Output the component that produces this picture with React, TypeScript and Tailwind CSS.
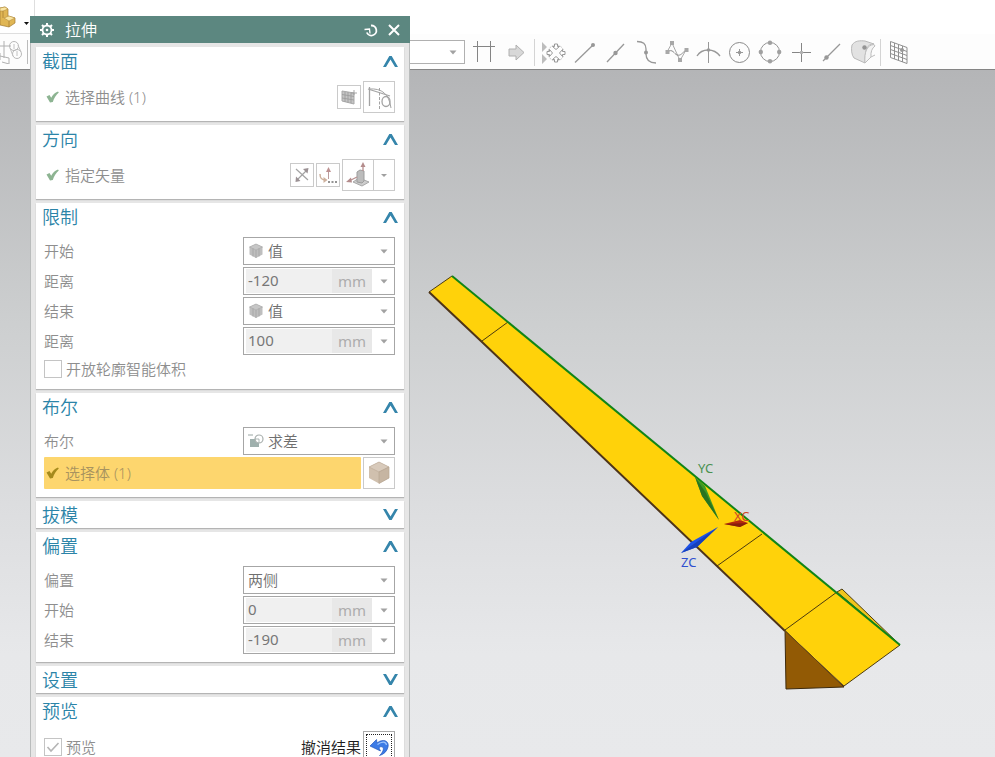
import type { ReactNode } from 'react';
import { useState } from 'react';

function Icon({ width = 24, height = 24, children }: { width?: number; height?: number; children: ReactNode }) {
  return (
    <svg
      width={width}
      height={height}
      viewBox={`0 0 ${width} ${height}`}
      fill="none"
      stroke="currentColor"
      aria-hidden="true"
      className="shrink-0"
    >
      {children}
    </svg>
  );
}

function CheckMark({ className }: { className: string }) {
  return (
    <svg width="13" height="12" viewBox="0 0 13 12" className={className} aria-hidden="true">
      <path d="M0.5 5.5 L3.5 4 L5.2 6.8 C7 3.5 9 1.5 12 0.5 L12.800 1.5 C10 4 8 7 6.800 11 L4 11.500 Z" fill="currentColor" />
    </svg>
  );
}

function CubeIcon() {
  return (
    <Icon width={14} height={16}>
      <path d="M7 1 L13.500 4 V11.500 L7 15 L0.500 11.500 V4 Z" fill="#bebebe" stroke="none" />
      <path d="M7 1 L13.500 4 L7 7 L0.500 4 Z" fill="#c6c6c6" stroke="#acacac" strokeWidth="0.7" />
      <path d="M7 7 V15 M4 5.500 V13.500 M10 5.500 V13.500" stroke="#a2a2a2" strokeWidth="0.8" />
    </Icon>
  );
}

function SubtractIcon() {
  return (
    <Icon width={16} height={16}>
      <path d="M0 2 H5" stroke="#9aa6a3" />
      <rect x="2" y="6" width="9" height="8" fill="#9fb0ad" stroke="none" />
      <circle cx="11" cy="6" r="4" fill="#fff" stroke="#a8afad" strokeWidth="1.200" />
      <path d="M7 6 H11 V10" stroke="#9aa6a3" strokeWidth="0.800" />
    </Icon>
  );
}

function Section({ title, defaultOpen = true, children }: { title: string; defaultOpen?: boolean; children?: ReactNode }) {
  const [open, setOpen] = useState(defaultOpen);
  return (
    <section className="bg-white shadow-[0_1px_1px_#b4b4b4]">
      <h2>
        <button
          type="button"
          aria-expanded={open}
          onClick={() => setOpen(!open)}
          className="flex h-[27px] w-full items-center justify-between pl-[6px] pr-[6px] text-left text-lg leading-none text-[#2b84a8]"
        >
          <span>{title}</span>
          <svg width="15" height="12" viewBox="0 0 15 12" aria-hidden="true">
            {open ? (
              <path d="M0 12 L6.300 1 H8.700 L15 12 H12 L7.500 4.500 L3 12 Z" fill="#3585ab" />
            ) : (
              <path d="M0 0 L6.300 11 H8.700 L15 0 H12 L7.500 7.500 L3 0 Z" fill="#3585ab" />
            )}
          </svg>
        </button>
      </h2>
      {open && children ? <div className="flex flex-col gap-[2px] pb-2 pl-2 pr-[9px] pt-[7px]">{children}</div> : null}
    </section>
  );
}

function DropArrow() {
  return (
    <svg width="8" height="5" viewBox="0 0 8 5" className="shrink-0" aria-hidden="true">
      <path d="M0.500 0.500 H7.500 L4 4.500 Z" fill="#a2a2a2" />
    </svg>
  );
}

function SelectRow({ id, label, value, icon }: { id: string; label: string; value: string; icon?: ReactNode }) {
  return (
    <div className="flex h-7 items-center justify-between">
      <label htmlFor={id}>{label}</label>
      <div className="flex h-7 w-[152px] items-center gap-1 border border-[#a6a6a6] bg-white pl-1 pr-[6px]">
        {icon ? <span className="flex w-4 justify-center">{icon}</span> : null}
        <select id={id} defaultValue={value} className="min-w-0 flex-1 appearance-none bg-transparent text-[#6f6f6f] outline-none">
          <option>{value}</option>
        </select>
        <DropArrow />
      </div>
    </div>
  );
}

function ValueRow({ id, label, value }: { id: string; label: string; value: string }) {
  return (
    <div className="flex h-7 items-center justify-between">
      <label htmlFor={id}>{label}</label>
      <div className="flex h-7 w-[152px] items-center border border-[#a6a6a6] bg-white p-[2px]">
        <input
          id={id}
          defaultValue={value}
          className="h-6 min-w-0 flex-1 bg-[#f0f0f0] pb-[2px] pl-[2px] font-normal text-[#777] outline-none"
        />
        <span className="flex h-6 w-10 items-center justify-center bg-[#e8e8e8] font-normal text-[#adadad]">mm</span>
        <button type="button" aria-label={`${label}选项`} className="flex h-6 w-5 items-center justify-end pr-1">
          <DropArrow />
        </button>
      </div>
    </div>
  );
}

function ToolButton({ label, large, children }: { label: string; large?: boolean; children: ReactNode }) {
  return (
    <button
      type="button"
      aria-label={label}
      className={`flex shrink-0 items-center justify-center border border-[#cacaca] bg-white text-[#a3a3a3] ${large ? 'size-8' : 'size-6'}`}
    >
      {children}
    </button>
  );
}

function SnapToolbar() {
  const tools = [
    {
      label: '点构造器',
      icon: (
        <>
          <path d="M1 2 L6 7 L1 12 Z M1 14 L6 19 L1 24 Z" fill="#bdbdbd" stroke="none" />
          <circle cx="15" cy="13" r="8" stroke="#c4c4c4" strokeDasharray="2 1" />
          <path
            d="M13.500 4 h3 v2.500 h2 L15 9.500 L11.500 6.500 h2 Z M13.500 22 h3 v-2.500 h2 L15 16.500 L11.500 19.500 h2 Z M6 11.500 v3 h2.500 v2 L11.500 13 L8.500 9.500 v2 Z M24 11.500 v3 h-2.500 v2 L18.500 13 L21.500 9.500 v2 Z"
            fill="#fff"
            stroke="#989898"
          />
        </>
      ),
    },
    {
      label: '端点',
      icon: (
        <>
          <path d="M3 22.500 L21 5" strokeWidth="1.300" />
          <circle cx="21" cy="5" r="2" fill="currentColor" stroke="none" />
        </>
      ),
    },
    {
      label: '中点',
      icon: (
        <>
          <path d="M4 22 L21 4" strokeWidth="1.300" />
          <circle cx="12.500" cy="13" r="2.200" fill="currentColor" stroke="none" />
        </>
      ),
    },
    {
      label: '控制点',
      icon: (
        <>
          <path d="M3 1.500 C9 1.500 12 4 12 9 V14 C12 19 15 23 22 23" strokeWidth="1.300" />
          <circle cx="12" cy="12.500" r="2" fill="currentColor" stroke="none" />
        </>
      ),
    },
    {
      label: '样条极点',
      icon: (
        <>
          <path d="M2 12 L7 3 L15 20.500 L21 10" stroke="#a8a8a8" />
          <path d="M2 12 C8 8 9 14 12 15 C16 16 17 13 21 10" stroke="#8a8a8a" />
          <path d="M0.500 10 h4 v4 h-4 Z M5 1 h4 v4 h-4 Z M13 18 h4 v4 h-4 Z M19.500 8 h4 v4 h-4 Z" fill="#a8a8a8" stroke="none" />
        </>
      ),
    },
    {
      label: '交点',
      icon: (
        <>
          <path d="M1 16 C6 8 18 8 24 16" strokeWidth="1.300" />
          <path d="M12.500 2 V23" />
          <circle cx="12.500" cy="10" r="1.800" fill="currentColor" stroke="none" />
        </>
      ),
    },
    {
      label: '圆心',
      icon: (
        <>
          <circle cx="12.500" cy="12.500" r="10" stroke="#8a8a8a" />
          <path d="M12.500 9 V16 M9 12.500 H16" />
          <circle cx="12.500" cy="12.500" r="1.800" fill="currentColor" stroke="none" />
        </>
      ),
    },
    {
      label: '象限点',
      icon: (
        <>
          <circle cx="12" cy="12" r="9.500" stroke="#939393" />
          <g fill="#a0a0a0" stroke="none">
            <circle cx="12" cy="2.800" r="2.200" />
            <circle cx="12" cy="21.200" r="2.200" />
            <circle cx="2.800" cy="12" r="2.200" />
            <circle cx="21.200" cy="12" r="2.200" />
          </g>
        </>
      ),
    },
    {
      label: '现有点',
      icon: (
        <>
          <path d="M12.500 3 V22 M3 12.500 H22" stroke="#858585" />
          <circle cx="12.500" cy="12.500" r="1.800" fill="#b0b0b0" stroke="none" />
        </>
      ),
    },
    {
      label: '曲线上的点',
      icon: (
        <>
          <path d="M3 21 L20 4" strokeWidth="1.300" />
          <circle cx="6.500" cy="17.500" r="2.200" fill="currentColor" stroke="none" />
        </>
      ),
    },
    {
      label: '面上的点',
      icon: (
        <>
          <path d="M1 5 C4 0.500 9 0.500 14 1 L23 4 C16 4 14 9 14 23 L3 18 C0.500 15 0 9 1 5 Z" fill="#e2e2e2" stroke="#b9b9b9" />
          <path d="M14 23 C13 12 16 5 23 4.500 L24 6 C21 8 19.500 12 20 17 Z" fill="#f3f3f3" stroke="#bdbdbd" />
          <path d="M20 17 L24 15" stroke="#bdbdbd" />
          <circle cx="13.500" cy="7.500" r="2.200" fill="#959595" stroke="none" />
        </>
      ),
    },
  ];

  return (
    <div className="flex h-9 items-center border-b border-[#858585] bg-[#fdfdfd] pt-px text-[#989898]">
      <button type="button" aria-label="装配约束" className="flex w-7 shrink-0 border-r border-[#bbb]">
        <Icon width={22} height={24}>
          <path d="M4 1 V18 M0 6 H11 M0 13 V20 M0 16 L9 18 V24 L2 22" stroke="#b0b0b0" />
          <circle cx="14" cy="6" r="4.500" stroke="#b8b8b8" />
          <circle cx="17" cy="14" r="4.500" stroke="#b8b8b8" />
          <path d="M10 8 L13 16 M18 5 L21 12 M14 4 V9 M17 11 V16" stroke="#c2c2c2" />
        </Icon>
      </button>
      <div className="ml-20 flex h-6 w-[357px] shrink-0 items-center border border-[#b0b0b0] bg-white pr-[7px]">
        <select aria-label="曲线规则" className="h-5 min-w-0 flex-1 appearance-none outline-none">
          <option></option>
        </select>
        <DropArrow />
      </div>
      <button type="button" aria-label="在相交处停止" className="ml-[7px]">
        <Icon width={24} height={24}>
          <path d="M1 6.500 H23 M5.500 1 V22 M18.500 1 V22" stroke="#858585" />
        </Icon>
      </button>
      <button type="button" aria-label="跟随圆角" className="ml-3">
        <Icon width={17} height={17}>
          <path d="M1 5 H8 V1 L16 8.500 L8 16 V12 H1 Z" fill="#d8d8d8" stroke="#b0b0b0" />
        </Icon>
      </button>
      <div className="ml-[9px] flex h-[27px] shrink-0 items-center gap-[6px] border-x border-[#d4d4d4] pl-[6px] pr-1">
        {tools.map((tool) => (
          <button key={tool.label} type="button" aria-label={tool.label}>
            <Icon width={25} height={25}>
              {tool.icon}
            </Icon>
          </button>
        ))}
      </div>
      <button type="button" aria-label="有界栅格上的点" className="ml-2">
        <Icon width={20} height={25}>
          <path
            d="M1.500 1.500 L18 7.500 V23.500 L1.500 17.500 Z M5.500 3 V19 M9.500 4.500 V20.500 M13.500 6 V22 M1.500 5.500 L18 11.500 M1.500 9.500 L18 15.500 M1.500 13.500 L18 19.500"
            stroke="#909090"
          />
          <circle cx="13" cy="10" r="2" fill="#999" stroke="none" />
        </Icon>
      </button>
    </div>
  );
}

function ModelView() {
  return (
    <svg viewBox="0 70 995 687" preserveAspectRatio="xMinYMin meet" className="block w-full" role="img" aria-label="拉伸体预览">
      <polygon points="837,592 842,589 900,645" fill="#f0c51c" stroke="#4c3d12" strokeWidth="1" />
      <polygon points="785,630 844,687 786,689" fill="#925a05" stroke="#3d2a0c" strokeWidth="1" />
      <polygon points="452,276 900,645 844,686 785,630 429,292" fill="#ffd20a" />
      <path
        d="M429 292 L452 276 M482 341 L508 322 M717 566 L762 534 M785 630 L837 592 M844 686 L900 645"
        fill="none"
        stroke="#4b3a10"
        strokeWidth="1"
      />
      <path d="M429 292 L482 342 L785 631" fill="none" stroke="#4e3418" strokeWidth="2" />
      <path d="M785 631 L844 686" fill="none" stroke="#6b4a12" strokeWidth="1" />
      <path d="M452 276 L900 645" fill="none" stroke="#118517" strokeWidth="2" />
      <polygon points="695,477 705,486 719,520 702,496" fill="#3c9a25" />
      <polygon points="695,477 702,496 719,520 706,493" fill="#2a7420" />
      <polygon points="724,524 740,520 748,523 740,527" fill="#b5280e" />
      <polygon points="724,524 748,523 740,527" fill="#86200c" />
      <polygon points="718,527 697,547 681,553 691,542" fill="#1d52e8" />
      <polygon points="718,527 697,547 681,553" fill="#1740ba" />
      <g fontFamily='"Noto Sans", sans-serif' fontSize="13" fontWeight="400">
        <text x="698" y="473" fill="#4a9150">YC</text>
        <text x="734" y="521" fill="#cf4724">XC</text>
        <text x="681" y="567" fill="#2f50cf">ZC</text>
      </g>
    </svg>
  );
}

function ExtrudeDialog() {
  return (
    <form className="absolute left-[30px] top-4 w-[380px] border-x border-[#b9bcbc] bg-[#e6e6e6] text-[15px] leading-5 text-[#8e8e8e]">
      <header className="-mx-px flex h-[27px] items-center bg-[#5c8780] px-[10px] text-white">
        <Icon width={14} height={14}>
          <circle cx="7" cy="7" r="4.500" strokeWidth="1.800" />
          <path d="M7 0 V3 M7 11 V14 M0 7 H3 M11 7 H14 M2 2 L4 4 M10 10 L12 12 M12 2 L10 4 M4 10 L2 12" strokeWidth="2" />
          <circle cx="7" cy="7" r="1.300" fill="currentColor" stroke="none" />
        </Icon>
        <h1 className="ml-[11px] flex-1 text-base">拉伸</h1>
        <button type="reset" aria-label="重置">
          <Icon width={14} height={14}>
            <path d="M7 2.500 A5 5 0 1 1 2.800 9.500" strokeWidth="1.800" />
            <path d="M0.500 6.500 L5.500 6 L6 10.500" strokeWidth="1.300" />
          </Icon>
        </button>
        <button type="button" aria-label="关闭" className="ml-[10px]">
          <Icon width={12} height={12}>
            <path d="M1 1 L11 11 M11 1 L1 11" strokeWidth="2" />
          </Icon>
        </button>
      </header>

      <div className="flex flex-col gap-1 px-[5px] py-1">
        <Section title="截面">
          <div className="flex h-8 items-center gap-[2px]">
            <CheckMark className="ml-[2px] text-[#8db492]" />
            <span className="ml-1 flex-1">选择曲线 (1)</span>
            <ToolButton label="绘制截面">
              <Icon width={16} height={16}>
                <path d="M1 2 L13 4 V15 L1 12 Z" fill="#c4c4c4" stroke="#a8a8a8" />
                <path d="M4 3 V13 M7 3 V13.500 M10 4 V14 M1 5.500 L13 7.500 M1 9 L13 11 M10 4 H16 M13 1 V6" stroke="#9d9d9d" strokeWidth="0.900" />
              </Icon>
            </ToolButton>
            <ToolButton label="曲线" large>
              <Icon width={26} height={26}>
                <path d="M3.500 3 V22 M2 5 L24 12" strokeWidth="1.300" />
                <path d="M13.500 4 V25" strokeDasharray="3 1.500" />
                <path d="M3 5 C16 4 23 10 25 24" />
                <ellipse cx="20" cy="17.500" rx="4" ry="5" strokeWidth="1.300" />
              </Icon>
            </ToolButton>
          </div>
        </Section>

        <Section title="方向">
          <div className="flex h-8 items-center gap-[2px]">
            <CheckMark className="ml-[2px] text-[#8db492]" />
            <span className="ml-1 flex-1">指定矢量</span>
            <ToolButton label="反向">
              <Icon width={16} height={16}>
                <path d="M2 2 L14 13 M3 13 L13 3" strokeWidth="1.200" />
                <path d="M14.500 1 L13.500 6.500 L9 2 Z M1.500 15 L2 9.500 L6.500 14 Z" fill="#9b9194" stroke="none" />
              </Icon>
            </ToolButton>
            <ToolButton label="矢量对话框">
              <Icon width={18} height={18}>
                <path d="M9.500 13 V6" stroke="#bc9c9c" />
                <path d="M9.500 1 L12 6 H7 Z" fill="#bd9191" stroke="none" />
                <path d="M1 8 C1 13 3 14 7 14" stroke="#cdb09c" strokeWidth="1.500" />
                <path d="M4.500 11 L8.500 14 L4.500 17 Z" fill="#cdb09c" stroke="none" />
                <path d="M9 15 h2 v2 h-2 Z M12.500 15 h2 v2 h-2 Z M16 15 h2 v2 h-2 Z" fill="#949494" stroke="none" />
              </Icon>
            </ToolButton>
            <div className="flex">
              <ToolButton label="面或平面法向" large>
                <Icon width={26} height={26}>
                  <path d="M8 20 L14 16 L24 20 L17 24 Z" fill="#cdcdcd" stroke="#a8a8a8" />
                  <path d="M12 10 L15 8 L19 9 V19 L17 21 L12 20 Z" fill="#bcbcbc" stroke="#9d9d9d" />
                  <path d="M18 9 V4 M12 15 L4 19" stroke="#b89090" strokeWidth="1.300" />
                  <path d="M18 0 L20.500 5 H15.500 Z M1 20 L6 15.500 L7 20.500 Z" fill="#b48c8c" stroke="none" />
                </Icon>
              </ToolButton>
              <button
                type="button"
                aria-label="矢量类型"
                className="-ml-px flex h-8 w-[22px] items-center justify-center border border-[#cacaca]"
              >
                <svg width="6" height="3" viewBox="0 0 6 3" aria-hidden="true">
                  <path d="M0 0 H6 L3 3 Z" fill="#a0a0a0" />
                </svg>
              </button>
            </div>
          </div>
        </Section>

        <Section title="限制">
          <SelectRow id="limitStart" label="开始" value="值" icon={<CubeIcon />} />
          <ValueRow id="startDistance" label="距离" value="-120" />
          <SelectRow id="limitEnd" label="结束" value="值" icon={<CubeIcon />} />
          <ValueRow id="endDistance" label="距离" value="100" />
          <label className="flex h-6 items-center gap-1">
            <input type="checkbox" className="size-[18px] appearance-none border border-[#c4c4c4] bg-white" />
            开放轮廓智能体积
          </label>
        </Section>

        <Section title="布尔">
          <SelectRow id="boolean" label="布尔" value="求差" icon={<SubtractIcon />} />
          <div className="flex h-8 items-center gap-[2px]">
            <div className="flex h-8 flex-1 items-center gap-[6px] rounded-[1px] bg-[#fdd66e] pl-[2px] text-[#a8935f]">
              <CheckMark className="text-[#a58a1c]" />
              <span>选择体 (1)</span>
            </div>
            <ToolButton label="选择体" large>
              <Icon width={22} height={24}>
                <path d="M11 1 L21 6 V17 L11 22.500 L1 17 V6 Z" fill="#d0c0ae" stroke="none" />
                <path d="M11 1 L21 6 L11 11 L1 6 Z" fill="#d8cabb" stroke="#bfae9b" strokeWidth="0.700" />
                <path d="M11 11 L21 6 V17 L11 22.500 Z" fill="#c6b5a2" stroke="#b8a693" strokeWidth="0.700" />
              </Icon>
            </ToolButton>
          </div>
        </Section>

        <Section title="拔模" defaultOpen={false} />

        <Section title="偏置">
          <SelectRow id="offset" label="偏置" value="两侧" />
          <ValueRow id="offsetStart" label="开始" value="0" />
          <ValueRow id="offsetEnd" label="结束" value="-190" />
        </Section>

        <Section title="设置" defaultOpen={false} />

        <Section title="预览">
          <div className="flex h-8 items-center justify-between">
            <label className="flex items-center gap-1">
              <span className="grid">
                <input
                  type="checkbox"
                  defaultChecked
                  className="peer col-start-1 row-start-1 size-[18px] appearance-none border border-[#c4c4c4] bg-white"
                />
                <svg
                  viewBox="0 0 18 18"
                  className="pointer-events-none invisible col-start-1 row-start-1 size-[18px] peer-checked:visible"
                  aria-hidden="true"
                >
                  <path d="M3.500 9 L7 13 L14.500 5" fill="none" stroke="#b5b5b5" strokeWidth="1.600" />
                </svg>
              </span>
              预览
            </label>
            <div className="flex items-center gap-[2px] text-[#1c1c1c]">
              <label htmlFor="undoResult">撤消结果</label>
              <button id="undoResult" type="button" className="size-8 border border-[#a9a9a9] bg-white p-[2px]">
                <span className="flex size-full items-center justify-center border border-dotted border-[#222]">
                  <Icon width={20} height={18}>
                    <path
                      d="M1 8 L7.500 1.500 L8 5 C14 0 20.500 3 19 9 C18 13 15 16.500 10.500 17.500 C14.500 14 15.500 9.500 13 8.800 C11.500 8.500 10.500 9 10 10 L11.500 13 Z"
                      fill="#3c7be6"
                      stroke="#2458bd"
                      strokeWidth="0.700"
                    />
                    <path d="M8.500 6.500 C13 3 17 3.500 17.500 7" stroke="#9cc3fb" strokeWidth="1.300" />
                  </Icon>
                </span>
              </button>
            </div>
          </div>
        </Section>
      </div>
    </form>
  );
}

export default function App() {
  return (
    <main className="relative flex h-screen flex-col overflow-hidden bg-white font-['Noto_Sans','Noto_Sans_CJK_SC',sans-serif] font-[350]">
      <div className="flex h-[34px] shrink-0 items-center">
        <button type="button" aria-label="装配" className="flex h-[34px] w-[35px] items-center border-b border-r border-[#dedede]">
          <Icon width={30} height={28}>
            <path d="M0 5 L5 4 L8 6 V13 L15 15 V20 L9 24 L0 22 Z" fill="#e0b654" stroke="#a17a32" strokeWidth="0.700" />
            <path d="M0 5 L5 4 L8 6 L3 8 H0 Z M4 15 L9 13 L15 15 L9 18 Z" fill="#fae5a2" stroke="#b68e42" strokeWidth="0.600" />
            <path d="M9 18 V24 M3 8 V15" stroke="#a17a32" strokeWidth="0.700" />
            <path d="M24 19 H29 L26.500 22 Z" fill="#111" stroke="none" />
          </Icon>
        </button>
      </div>
      <SnapToolbar />
      <div className="min-h-0 flex-1 overflow-hidden bg-[linear-gradient(180deg,#b4b5b7_0%,#cdcfd0_37%,#dcdddf_63%,#e7e8ea_85%,#e8e9eb_100%)]">
        <ModelView />
      </div>
      <ExtrudeDialog />
    </main>
  );
}
